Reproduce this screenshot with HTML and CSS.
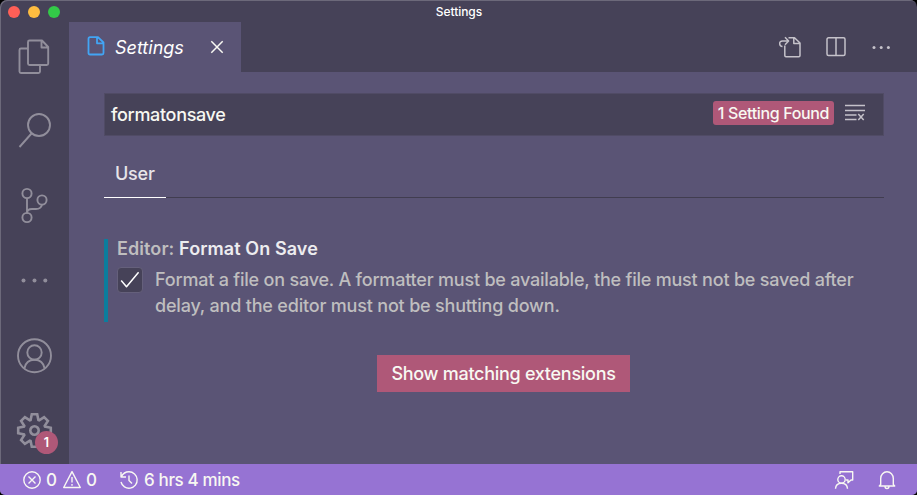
FILE: index.html
```html
<!DOCTYPE html>
<html lang="en">
<head>
<meta charset="utf-8">
<title>Settings</title>
<link rel="stylesheet" href="styles.css">
</head>
<body>
<div class="window">
  <header class="titlebar">
    <div class="lights"><i class="light red"></i><i class="light yellow"></i><i class="light green"></i></div>
    <span class="title">Settings</span>
  </header>
  <div class="workbench">
    <nav class="activity">
      <svg viewBox="0 0 40 40"><path d="M14 12.500H7Q5.500 12.500 5.500 14V35.500Q5.500 37 7 37H24.500Q26 37 26 35.500V29M15.500 4.500H28L34.200 11V27.500Q34.200 29 32.700 29H15.500Q14 29 14 27.500V6Q14 4.500 15.500 4.500ZM27.500 4.500V11.500H34.200"/></svg>
      <svg viewBox="0 0 40 40"><circle cx="25" cy="14" r="11"/><path d="M17.500 22.500L5.500 36"/></svg>
      <svg viewBox="0 0 40 40"><circle cx="13" cy="7.500" r="4.600"/><circle cx="28" cy="14" r="4.600"/><circle cx="13" cy="31.500" r="4.600"/><path d="M13 12V27C13 24 15.500 23 18 23H22C25.500 23 27.500 21 28 18.600"/></svg>
      <svg viewBox="0 0 40 40" class="dots"><circle cx="9.500" cy="19.500" r="2"/><circle cx="20.500" cy="19.500" r="2"/><circle cx="31.300" cy="19.500" r="2"/></svg>
      <svg viewBox="0 0 40 40"><circle cx="20.500" cy="19.700" r="16.500"/><circle cx="20.500" cy="16.500" r="7.200"/><path d="M10.300 32.500C11.500 26.500 15.500 23.700 20.500 23.700S29.500 26.500 30.700 32.500"/></svg>
      <div class="manage">
        <svg viewBox="0 0 40 40"><g transform="translate(20.500 19.500)"><path d="M-3.900-10.500L-2.700-16.300H2.700L3.900-10.500L4.700-10.200L9.600-13.400L13.400-9.600L10.200-4.700L10.500-3.900L16.300-2.700V2.700L10.500 3.900L10.200 4.700L13.400 9.600L9.600 13.400L4.700 10.200L3.900 10.500L2.700 16.300H-2.700L-3.900 10.500L-4.700 10.200L-9.600 13.400L-13.400 9.600L-10.200 4.700L-10.500 3.900L-16.300 2.700V-2.700L-10.500-3.900L-10.200-4.700L-13.400-9.600L-9.600-13.400L-4.700-10.200Z"/><circle r="4.200"/></g></svg>
        <span class="badge">1</span>
      </div>
    </nav>
    <main class="editor">
      <div class="tabs">
        <div class="tab">
          <svg class="fileicon" viewBox="0 0 18 20"><path d="M3 1.200H11L16.500 6.500V17Q16.500 18.500 15 18.500H3Q1.500 18.500 1.500 17V2.700Q1.500 1.200 3 1.200ZM10 1.500V7.300H16.300"/></svg>
          <span class="tabname">Settings</span>
          <svg class="close" viewBox="0 0 14 14"><path d="M1.300 1.300L12.700 12.700M12.700 1.300L1.300 12.700"/></svg>
        </div>
        <div class="actions">
          <svg viewBox="0 0 24 24"><path d="M10.500 2.700H16.500L22 8V20.500Q22 21.700 20.800 21.700H8Q6.800 21.700 6.800 20.500V10.500M15.800 2.700V8.500H22M4.500 11.500C1 11.500.5 6 4.500 6H9.500M7 2.300L10.600 6L7 9.700"/></svg>
          <svg viewBox="0 0 24 24"><rect x="3" y="2.800" width="18" height="17.800" rx="1.500"/><path d="M12 3V20.500"/></svg>
          <svg viewBox="0 0 24 24" class="dots"><circle cx="4" cy="12.500" r="1.500"/><circle cx="11.200" cy="12.500" r="1.500"/><circle cx="18.400" cy="12.500" r="1.500"/></svg>
        </div>
      </div>
      <section class="settings">
        <div class="search">
          <span class="query">formatonsave</span>
          <span class="count">1 Setting Found</span>
          <svg class="clear" viewBox="0 0 22 18"><path d="M1 1.500H21M1 6.500H21M1 11H12.500M1 15.500H12.500M14.300 10L19.700 16M19.700 10L14.300 16"/></svg>
        </div>
        <div class="scopes"><span class="scope">User</span></div>
        <article class="setting">
          <h2><span class="category">Editor: </span><span class="name">Format On Save</span></h2>
          <div class="row">
            <span class="check"><svg viewBox="0 0 24 24"><path d="M3.200 12.500L8.500 18.700L20.600 4.200"/></svg></span>
            <p><span class="first">Format a file on save. A formatter must be available, the file must not be saved after</span><br><span class="second">delay, and the editor must not be shutting down.</span></p>
          </div>
        </article>
        <button class="show">Show matching extensions</button>
      </section>
    </main>
  </div>
  <footer class="status">
    <svg viewBox="0 0 20 20"><circle cx="10" cy="10" r="8.200"/><path d="M6.500 6.500L13.500 13.500M13.500 6.500L6.500 13.500"/></svg>
    <span class="num">0</span>
    <svg class="warn" viewBox="0 0 20 20"><path d="M10 1.700L18.300 17.500H1.700ZM10 7V12.500M10 14V15.700"/></svg>
    <span class="num">0</span>
    <svg class="history" viewBox="0 0 20 20"><path d="M2 2V7H7M2.300 6.800C4 3.500 7 1.800 10 1.800A8.200 8.200 0 1 1 2 12M10 5.500V10.500L13 13.500"/></svg>
    <span class="time">6 hrs 4 mins</span>
    <span class="spacer"></span>
    <svg class="feedback" viewBox="0 0 20 20"><circle cx="7.500" cy="9.500" r="3.700"/><path d="M1.500 18.700C1.700 15 4.300 13.200 7.500 13.200S13.300 15 13.500 18.700M6 4V1.700H18.700V10H17L14 12.700V10H12"/></svg>
    <svg class="bell" viewBox="0 0 20 20"><path d="M3.700 14.500V8.500A6.300 6.700 0 0 1 16.300 8.500V14.500L17.700 16H2.300ZM8 16.300Q8 18.500 10 18.500T12 16.300"/></svg>
  </footer>
</div>
</body>
</html>
```
FILE: styles.css
```css
* { box-sizing: border-box; }
body { margin: 0; background: #000; font-family: Inter, "Liberation Sans", sans-serif; font-size: 18px; font-weight: 450; color: #f8f8f2; }
svg { display: block; flex: none; fill: none; stroke: currentColor; stroke-linejoin: round; }
.dots { fill: currentColor; stroke: none; }
.window { width: 917px; height: 495px; display: flex; flex-direction: column; overflow: hidden; border-radius: 7px 7px 5px 5px; background: #464258; box-shadow: inset 1px 1px #6c697a; }
.titlebar { height: 22px; display: grid; grid-template-columns: 1fr auto 1fr; align-items: center; }
.lights { display: flex; gap: 8px; padding-left: 8px; }
.light { width: 12px; height: 12px; border-radius: 50%; }
.red { background: #ff5f57; }
.yellow { background: #febc40; }
.green { background: #33c948; }
.title { font-size: 12px; line-height: 22px; color: #fff; padding: 1px 0 0 1px; letter-spacing: -0.05px; }
.workbench { height: 442px; display: flex; }
.activity { width: 69px; padding: 14px 0 0 14px; display: flex; flex-direction: column; gap: 35px; color: #918e9b; box-shadow: inset 1px 0 #6c697a; }
.activity svg { width: 40px; height: 40px; stroke-width: 1.9; }
.manage { position: relative; }
.manage svg { stroke-width: 2.6; stroke-linejoin: miter; }
.badge { position: absolute; left: 21px; top: 20px; width: 23px; height: 23px; border-radius: 50%; background: #af5878; color: #fff; font-size: 12.500px; font-weight: 600; line-height: 23px; text-align: center; }
.editor { flex: 1; background: #5a5475; }
.tabs { height: 50px; display: flex; justify-content: space-between; background: #464258; }
.tab { width: 172px; display: flex; align-items: center; padding-left: 18px; background: #5a5475; }
.fileicon { width: 18px; height: 20px; color: #42a5f5; stroke-width: 1.8; margin-top: -3px; }
.tabname { width: 70px; margin-left: 10px; margin-right: 25px; font-style: italic; color: #fff; white-space: nowrap; }
.close { width: 14px; height: 14px; stroke-width: 1.5; }
.actions { display: flex; align-items: center; gap: 22px; padding-right: 23px; color: #c5c2ca; }
.actions svg { width: 24px; height: 24px; stroke-width: 1.5; }
.settings { padding: 21px 33px 0 35px; display: flex; flex-direction: column; }
.search { height: 43px; display: flex; align-items: center; padding: 0 18px 2px 6px; background: #464258; border: 1px solid #504b65; }
.query { flex: 1; padding-top: 2px; letter-spacing: -0.33px; }
.count { width: 121px; height: 24px; margin-bottom: 2px; line-height: 25px; border-radius: 3px; background: #af5878; text-align: center; white-space: nowrap; font-size: 16px; letter-spacing: -0.35px; }
.clear { width: 22px; height: 18px; margin-left: 10px; margin-right: -1px; margin-bottom: 2px; color: #c5c2ca; stroke-width: 1.5; }
.scopes { height: 62px; display: flex; border-bottom: 1px solid #413d50; }
.scope { width: 62px; height: 62px; padding: 14px 0 0 11px; line-height: 48px; border-bottom: 1px solid #fff; color: #e7e5e9; letter-spacing: -0.2px; }
.setting { height: 83px; margin-top: 41px; border-left: 4px solid #0c7d9d; padding-left: 9px; }
h2 { margin: 0; font-size: 18px; font-weight: 600; line-height: 20px; white-space: pre; color: #edecef; letter-spacing: 0.08px; }
.category { color: #bfbebf; }
.row { display: flex; margin-top: 8px; }
.check { width: 26px; height: 26px; border: 1px solid #65607b; border-radius: 4px; background: #464258; }
.check svg { width: 24px; height: 24px; stroke-width: 1.5; color: #fff; }
p { margin: 0 0 0 12px; line-height: 26px; white-space: nowrap; color: #bfbebf; }
.first { letter-spacing: -0.21px; }
.second { letter-spacing: -0.19px; }
.show { width: 253px; height: 37px; margin: 33px 0 0 273px; padding: 0; border: 0; background: #af5878; color: #f8f8f2; font: inherit; letter-spacing: -0.28px; white-space: nowrap; }
.status { height: 31px; display: flex; align-items: center; padding-left: 22px; padding-right: 20px; background: #9673d3; font-size: 17px; white-space: nowrap; }
.status svg { width: 20px; height: 20px; stroke-width: 1.4; }
.num { width: 11px; margin-left: 4px; margin-right: 5px; }
.history { margin-left: 17px; margin-right: 5px; }
.time { letter-spacing: -0.36px; }
.spacer { flex: 1; }
.feedback { margin-right: 23px; }
```
